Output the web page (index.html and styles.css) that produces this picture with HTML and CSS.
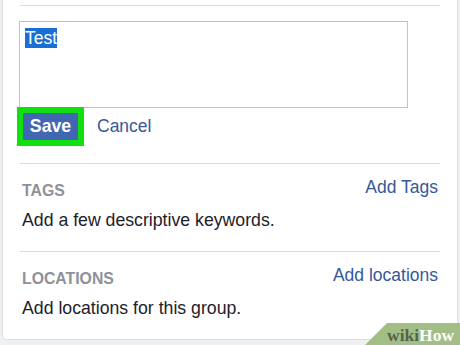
FILE: index.html
```html
<!DOCTYPE html>
<html lang="en">
<head>
    <meta charset="UTF-8">
    <meta name="viewport" content="width=device-width, initial-scale=1.0">
    <title>Group description</title>
    <link rel="stylesheet" href="styles.css">
</head>
<body>
    <div class="panel">
        <div class="rule"></div>

        <div class="edit">
            <div class="textbox"><span class="selected">Test</span></div>
            <div class="actions">
                <button class="save">Save</button>
                <a class="cancel" href="#">Cancel</a>
            </div>
        </div>

        <div class="section">
            <div class="section-head">
                <span class="label">TAGS</span>
                <a class="link" href="#">Add Tags</a>
            </div>
            <p class="desc">Add a few descriptive keywords.</p>
        </div>

        <div class="section">
            <div class="section-head">
                <span class="label">LOCATIONS</span>
                <a class="link" href="#">Add locations</a>
            </div>
            <p class="desc">Add locations for this group.</p>
        </div>
    </div>

    <div class="watermark"><span class="wiki">wiki</span><span class="how">How</span></div>
</body>
</html>
```

FILE: styles.css
```css
body {
    margin: 0;
    background-color: #eef0f2;
    font-family: "Liberation Sans", Arial, sans-serif;
    color: #1d2129;
    height: 345px;
    overflow: hidden;
}

.panel {
    box-sizing: border-box;
    width: 456px;
    height: 340px;
    margin-left: 2px;
    padding: 5px 17px 0;
    background-color: #fff;
    border: 1px solid #dddfe2;
    border-top: none;
    border-radius: 0 0 5px 5px;
}

.rule {
    border-top: 1px solid #dadde1;
}

.edit {
    padding-top: 15px;
    padding-bottom: 23px;
    border-bottom: 1px solid #dadde1;
}

.textbox {
    box-sizing: border-box;
    width: 389px;
    height: 87px;
    margin-left: -1px;
    padding: 6px 5px;
    border: 1px solid #bec3c9;
    font-size: 17.5px;
    line-height: 20px;
}

.selected {
    background-color: #1a6fd4; /* text selection */
    color: #fff;
}

.actions {
    display: flex;
    align-items: center;
    margin-top: 5px;
}

.save {
    width: 55px;
    height: 27px;
    padding: 0;
    border: none;
    outline: 6px solid #10e010; /* highlight around the button */
    background-color: #4267b2;
    color: #fff;
    font-family: inherit;
    font-size: 17.7px;
    font-weight: bold;
    line-height: 27px;
    margin-left: 3px;
}

.cancel {
    margin-left: 19px;
    font-size: 17.5px;
    color: #365899;
    text-decoration: none;
}

.section {
    padding: 13px 0 20px;
    border-bottom: 1px solid #dadde1;
}

.section:last-child {
    border-bottom: none;
}

.section-head {
    display: flex;
    justify-content: space-between;
    align-items: flex-start;
}

.label {
    margin-top: 5px;
    margin-left: 2px;
    font-size: 15.8px;
    line-height: 18px;
    font-weight: bold;
    color: #8d9199;
}

.link {
    font-size: 17.5px;
    line-height: 21px;
    color: #365899;
    text-decoration: none;
    margin-right: 2px;
}

.desc {
    margin: 10px 0 0 2px;
    font-size: 17.7px;
    line-height: 21px;
}

/* wikiHow corner badge */
.watermark {
    position: absolute;
    right: 0;
    bottom: 0;
    width: 73px;
    height: 22px;
    padding-left: 22px;
    background-color: #a2be86;
    clip-path: polygon(22px 0, 100% 0, 100% 100%, 0 100%);
    font-family: "Liberation Serif", serif;
    font-weight: bold;
    font-size: 17.5px;
    line-height: 24px;
}

.wiki {
    color: #56634a;
}

.how {
    color: #fff;
}
```
